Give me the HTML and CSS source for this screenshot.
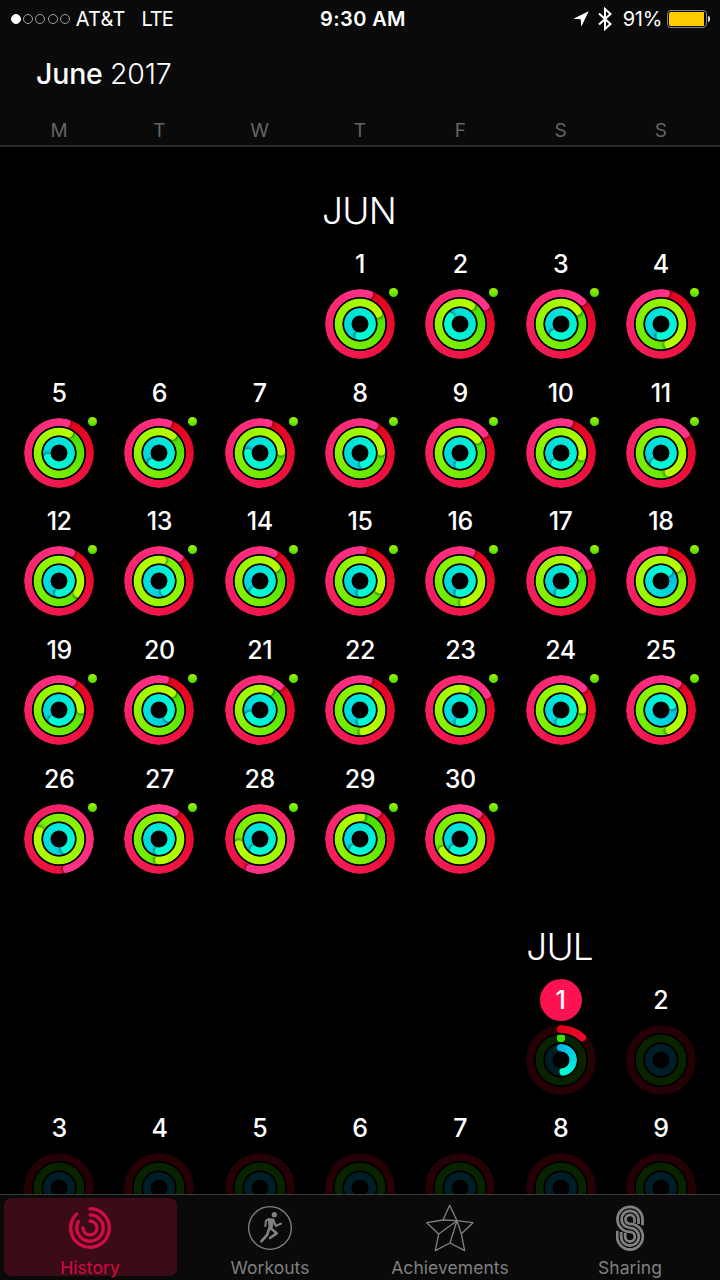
FILE: index.html
```
<!DOCTYPE html>
<html lang="en">
<head>
    <meta charset="UTF-8">
    <meta name="viewport" content="width=device-width, initial-scale=1.0">
    <title>Activity History</title>
    <link rel="stylesheet" href="styles.css">
</head>
<body>
    <header class="header">
        <div class="status-bar">
            <div class="status-left">
                <div class="signal"><i class="on"></i><i></i><i></i><i></i><i></i></div>
                <span class="carrier">AT&amp;T</span>
                <span class="network">LTE</span>
            </div>
            <div class="time">9:30 AM</div>
            <div class="status-right">
                <svg class="location" width="16" height="16" viewBox="0 0 16 16"><path d="M15.700 0.300L8.300 15.700L7.700 8.300L0.300 7.700Z" fill="#fff"/></svg>
                <svg class="bluetooth" width="14" height="24" viewBox="0 0 14 24"><path d="M1 6.500L12.500 17L7 22V2L12.500 7L1 17.500" fill="none" stroke="#fff" stroke-width="2"/></svg>
                <span class="percent">91%</span>
                <div class="battery"><div class="battery-level"></div></div>
                <div class="battery-nub"></div>
            </div>
        </div>
        <h1 class="title">June <span>2017</span></h1>
        <div class="weekdays">
            <span>M</span><span>T</span><span>W</span><span>T</span><span>F</span><span>S</span><span>S</span>
        </div>
    </header>

    <main class="calendar">
        <h2 class="month"><span class="jun">JUN</span></h2>
        <div class="days" id="june"></div>
        <h2 class="month"><span class="jul">JUL</span></h2>
        <div class="days" id="july"></div>
    </main>

    <nav class="tab-bar">
        <a class="tab active">
            <div class="icon">
                <svg width="44" height="44" viewBox="-22 -22 44 44" fill="none" stroke="currentColor" stroke-width="3.3" stroke-linecap="round">
                    <path d="M0 -19.3A19.3 19.3 0 1 1 -13.4 -13.9"/>
                    <path d="M0 -13.2A13.2 13.2 0 1 1 -11.4 -6.6"/>
                    <path d="M0 -7A7 7 0 1 1 -7 0"/>
                </svg>
            </div>
            <span>History</span>
        </a>
        <a class="tab">
            <div class="icon">
                <svg width="44" height="44" viewBox="0 0 132 132" fill="none" stroke="currentColor" stroke-linecap="round" stroke-linejoin="round">
                    <circle cx="66" cy="66" r="64" stroke-width="4"/>
                    <circle cx="79" cy="26" r="8" fill="currentColor" stroke="none"/>
                    <path d="M63 40L76 41L70 66L65 63Z" fill="currentColor" stroke-width="7"/>
                    <path d="M63 39L54 44L52 60" stroke-width="6"/>
                    <path d="M77 43L83 60L99 53" stroke-width="6"/>
                    <path d="M70 68L86 82L66 96" stroke-width="8"/>
                    <path d="M65 65L57 87L40 106" stroke-width="8"/>
                </svg>
            </div>
            <span>Workouts</span>
        </a>
        <a class="tab">
            <div class="icon">
                <svg width="50" height="48" viewBox="195 281 150 144" fill="none" stroke="currentColor" stroke-width="4" stroke-linejoin="round">
                    <path d="M269 285L291 331L339 337L304 370L314 421L270 398L226 421L236 371L200 337L249 329Z"/>
                    <path d="M249 329L291 331L236 371M291 331L270 398M291 331L304 370"/>
                </svg>
            </div>
            <span>Achievements</span>
        </a>
        <a class="tab">
            <div class="icon">
                <svg width="28" height="46" viewBox="768 285 84 138" fill="none" stroke="currentColor" stroke-width="8.5">
                    <path d="M847.500 346V328A37.500 37.500 0 1 0 810 365.500A14.500 14.500 0 1 1 795.500 380V369"/>
                    <path d="M835.500 342V328A25.500 25.500 0 1 0 810 353.500A26.500 26.500 0 1 1 783.500 380V366"/>
                    <path d="M823.500 338V328A13.500 13.500 0 1 0 810 341.500A38.500 38.500 0 1 1 771.500 380V362"/>
                </svg>
            </div>
            <span>Sharing</span>
        </a>
    </nav>
    <script src="rings.js"></script>
</body>
</html>
```
FILE: styles.css
```
body {
    margin: 0;
    height: 1280px;
    overflow: hidden;
    display: flex;
    flex-direction: column;
    background: #000;
    color: #fff;
    font-family: Inter, "Liberation Sans", sans-serif;
}

/* header */
.header {
    box-sizing: border-box;
    flex: none;
    height: 147px;
    background: #0a0a0a;
    border-bottom: 2px solid #2b2b2b;
}
.status-bar {
    display: grid;
    grid-template-columns: 1fr auto 1fr;
    align-items: center;
    height: 37px;
    padding: 0 10px 0 11px;
    font-size: 20px;
}
.status-left, .status-right {
    display: flex;
    align-items: center;
}
.status-right {
    justify-content: flex-end;
}
.signal {
    display: flex;
    gap: 2.2px;
}
.signal i {
    box-sizing: border-box;
    width: 10px;
    height: 10px;
    border: 1px solid #a0a0a0;
    border-radius: 50%;
}
.signal .on {
    background: #fff;
    border-color: #fff;
}
.carrier {
    margin-left: 6px;
    letter-spacing: 0.2px;
}
.network {
    margin-left: 16px;
    letter-spacing: -1.1px;
}
.time {
    padding-left: 5px;
    font-weight: 600;
    letter-spacing: 0.4px;
}
.bluetooth {
    margin-left: 9px;
}
.percent {
    margin-left: 11px;
    letter-spacing: -0.3px;
}
.battery {
    box-sizing: border-box;
    width: 40px;
    height: 18px;
    margin-left: 5px;
    padding: 1px;
    border: 1px solid #858585;
    border-radius: 4px;
}
.battery-level {
    width: 35px;
    height: 14px;
    background: #ffcc00;
    border-radius: 2px 0 0 2px;
}
.battery-nub {
    width: 2px;
    height: 6px;
    margin-left: 1px;
    background: #ddd;
    border-radius: 0 2px 2px 0;
}
.title {
    margin: 0;
    padding: 19px 0 0 36px;
    font-size: 28.5px;
    line-height: 36px;
    font-weight: 500;
    letter-spacing: -0.2px;
}
.title span {
    font-weight: 300;
}
.weekdays {
    display: grid;
    grid-template-columns: repeat(7, 1fr);
    padding: 27px 9px 0;
    font-size: 19px;
    line-height: 24px;
    text-align: center;
    color: #646464;
}

/* calendar */
.calendar {
    flex: 1;
    overflow: hidden;
    padding: 9.7px 9px 0;
}
.month, .days {
    display: grid;
    grid-template-columns: repeat(7, 1fr);
}
.month {
    margin: 0;
    padding: 34.7px 0 17.7px;
    font-size: 37px;
    line-height: 40px;
    font-weight: 350;
    letter-spacing: -0.8px;
    text-align: center;
}
.month span {
    margin-right: 2px;
}
.jun {
    grid-column: 4;
}
.jul {
    grid-column: 6;
}
.days {
    grid-auto-rows: 128.67px;
}
.day {
    display: flex;
    flex-direction: column;
    align-items: center;
}
.number {
    margin-bottom: 10px;
    font-size: 25px;
    line-height: 30px;
    font-weight: 500;
    letter-spacing: -0.4px;
}
.number.today {
    width: 42px;
    margin: -6px 0 4px;
    line-height: 42px;
    text-align: center;
    background: #fc1251;
    border-radius: 50%;
}
.rings {
    position: relative;
    width: 70px;
    height: 70px;
}
.ring {
    position: absolute;
    inset: 0;
    border-radius: 50%;
    overflow: hidden;
}
.move {
    background: #250005;
    mask: radial-gradient(circle, transparent 26.6px, #000 27.4px);
}
.exercise {
    background: #092300;
    mask: radial-gradient(circle, transparent 17.2px, #000 18px, #000 24.9px, transparent 25.7px);
}
.stand {
    background: #001e26;
    mask: radial-gradient(circle, transparent 8px, #000 8.8px, #000 15.4px, transparent 16.2px);
}

/* rounded end of a ring, turned to where the progress stops */
.arm {
    position: absolute;
    inset: 0;
}
.arm i {
    display: block;
    width: 8px;
    height: 8px;
    margin: 0 auto;
    border-radius: 50%;
}
.exercise .arm {
    inset: 9.5px;
}
.stand .arm {
    inset: 19px;
}
.stand .arm i {
    width: 7.5px;
    height: 7.5px;
}
.arm .over {
    box-shadow: 2px 0 2px rgba(0, 0, 0, 0.35);
}
.workout-dot {
    position: absolute;
    top: -1px;
    right: -3px;
    width: 9px;
    height: 9px;
    border-radius: 50%;
    background: linear-gradient(#a8f000, #45e000);
}

/* tab bar */
.tab-bar {
    box-sizing: border-box;
    flex: none;
    display: grid;
    grid-template-columns: repeat(4, 1fr);
    height: 86px;
    padding-top: 3px;
    background: #0a0a0a;
    border-top: 1px solid #3c3c3c;
}
.tab {
    display: flex;
    flex-direction: column;
    align-items: center;
    height: 78px;
    margin: 0 3px 0 4px;
    border-radius: 8px;
    color: #808080;
    font-size: 17.5px;
    letter-spacing: 0.05px;
}
.icon {
    flex: none;
    display: flex;
    align-items: center;
    height: 48px;
    margin: 6px 1px 0 0;
}
.tab span {
    margin: 5px 1px 0 0;
    line-height: 22px;
}
.active {
    background: #3b0b17;
    color: #d30d44;
}
```
FILE: rings.js
```
// tip angle of each ring in degrees from 12 o'clock, all past the first lap
const june = [
    [377, 418, 543], [415, 388, 666], [403, 410, 574], [369, 517, 543],
    [374, 385, 606], [377, 396, 574], [376, 446, 630], [387, 446, 520], [411, 411, 543], [375, 459, 568], [412, 516, 571],
    [383, 481, 540], [401, 726, 511], [386, 408, 569], [365, 470, 532], [381, 529, 543], [421, 409, 546], [366, 769, 398],
    [385, 446, 571], [371, 394, 488], [399, 385, 601], [376, 528, 532], [420, 373, 542], [405, 446, 543], [392, 514, 426],
    [525, 649, 509], [390, 540, 540], [559, 613, 568], [393, 363, 571], [396, 594, 570]
];

const rings = [
    { name: "move", from: [225, 0, 20], to: [255, 50, 138] },
    { name: "exercise", from: [60, 222, 0], to: [184, 255, 0] },
    { name: "stand", from: [0, 184, 230], to: [0, 255, 210] }
];

function mix(ring, t) {
    const c = ring.from.map((v, i) => Math.round(v + (ring.to[i] - v) * t));
    return `rgb(${c.join(",")})`;
}

function cap(angle, color, over) {
    return `<div class="arm" style="transform:rotate(${angle}deg)"><i class="${over ? "over" : ""}" style="background:${color}"></i></div>`;
}

function drawRing(ring, angle, end = 1) {
    let background = "";
    let caps = "";
    if (angle >= 360) {
        const start = mix(ring, (angle - 360) / angle);
        background = `conic-gradient(from ${angle % 360}deg, ${start}, ${mix(ring, 1)})`;
        caps = cap(angle, mix(ring, 1), true);
    } else if (angle !== null) {
        const start = mix(ring, 0);
        if (angle > 0) {
            background = `conic-gradient(${start}, ${mix(ring, end)} ${angle}deg, transparent ${angle}deg)`;
        }
        caps = cap(0, start) + cap(angle, mix(ring, angle > 0 ? end : 0));
    }
    const style = background ? ` style="background-image:${background}"` : "";
    return `<div class="ring ${ring.name}"${style}>${caps}</div>`;
}

function addDay(parent, number, angles, options = {}) {
    const day = document.createElement("div");
    day.className = "day";
    if (options.column) day.style.gridColumn = options.column;
    day.innerHTML = `
        <div class="number ${options.today ? "today" : ""}">${number}</div>
        <div class="rings">
            ${rings.map((ring, i) => drawRing(ring, angles[i], options.ends ? options.ends[i] : 1)).join("")}
            ${options.dot ? '<div class="workout-dot"></div>' : ""}
        </div>
    `;
    parent.appendChild(day);
}

const juneDays = document.getElementById("june");
june.forEach((angles, i) => addDay(juneDays, i + 1, angles, { dot: true, column: i === 0 ? 4 : 0 }));

const julyDays = document.getElementById("july");
addDay(julyDays, 1, [43, 0, 168], { today: true, column: 6, ends: [0.2, 0, 1] });
for (let n = 2; n <= 9; n++) {
    addDay(julyDays, n, [null, null, null]);
}
```
